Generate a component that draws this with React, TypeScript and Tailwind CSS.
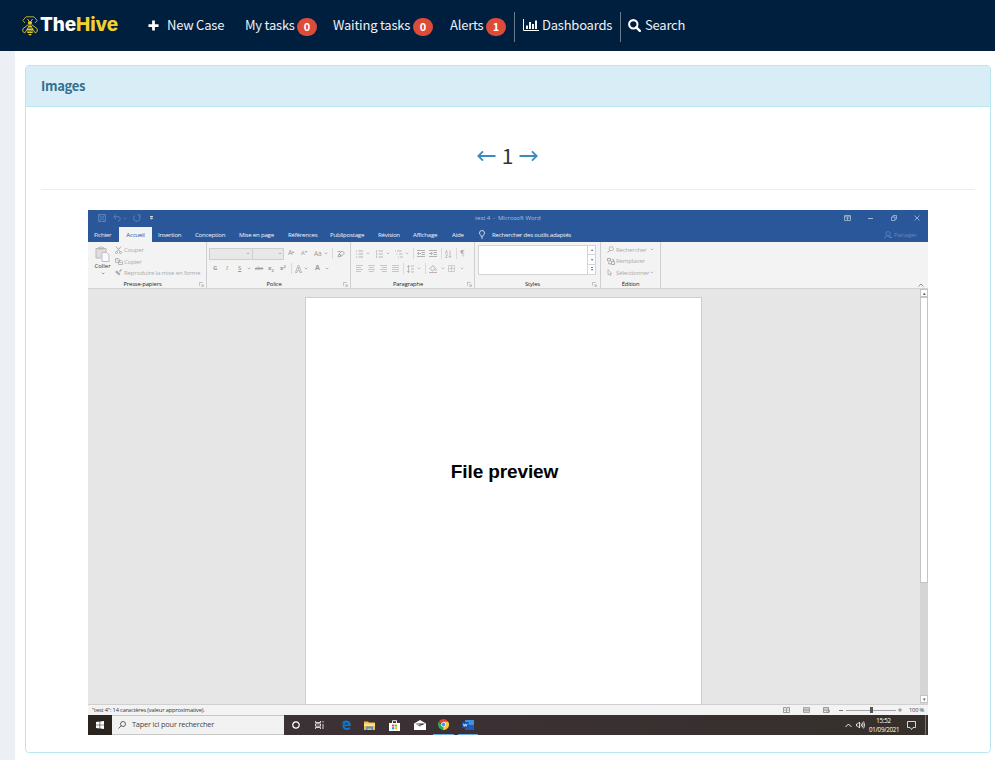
import type { ReactNode } from "react";

type BoxProps = { c: string; children?: ReactNode };

const Box = ({ c, children }: BoxProps) => (
  <div className={`flex shrink-0 items-center whitespace-nowrap ${c}`}>{children}</div>
);

type GlyphProps = { c: string; box: string; children: ReactNode };

const Glyph = ({ c, box, children }: GlyphProps) => (
  <svg className={`block shrink-0 ${c}`} viewBox={box} fill="none" stroke="currentColor">
    {children}
  </svg>
);

const BeeLogo = () => (
  <Glyph c="h-5 w-4 text-[#e5c932]" box="0 0 16 20">
    <path d="M3 7 .8 4.500 4 .8h8l3.200 3.700L13 7" strokeWidth=".8" />
    <path d="M5.500 3 7 5.200M10.500 3 9 5.200" strokeWidth=".9" />
    <path d="M6 5.800 8 5l2 .8v1.700L8 9 6 7.500z" fill="currentColor" stroke="none" />
    <path d="M6.500 8.500.8 12.800v2.700l2 1.500 3.400-5.500M9.500 8.500l5.700 4.300v2.700l-2 1.500-3.400-5.500" strokeWidth=".9" />
    <path d="M6.500 9.500h3l.8 2H5.700zM5.200 12.500h5.600l.3 2H4.900zM4.900 15.500h6.200l-.6 1.500h-5zM6 18h4l-2 1.800z" fill="currentColor" stroke="none" />
  </Glyph>
);

const Badge = ({ children }: { children: ReactNode }) => (
  <span className="mt-[3px] flex h-[18px] w-[20px] items-center justify-center rounded-full bg-[#dd4b39] pb-[2px] font-['Noto_Sans_CJK_SC',sans-serif] text-[11px] leading-[16px] font-bold text-white">
    {children}
  </span>
);

const TopBar = () => (
  <header className="flex h-[51px] items-center bg-[#001f3f] pl-[22px] font-['Noto_Sans_CJK_SC',sans-serif] text-[13px] leading-[20px] tracking-[-0.22px] text-[#eef1f4]">
    <Box c="w-[18px]"><BeeLogo /></Box>
    <Box c="w-[108px] pb-[2px] font-['Inter',sans-serif] text-[19px] font-extrabold tracking-[-0.1px] text-white">
      The<span className="text-[#f3d02f]">Hive</span>
    </Box>
    <Box c="w-[19px]">
      <Glyph c="mb-px h-[11px] w-[11px] text-white" box="0 0 12 12"><path d="M6 .5v11M.5 6h11" strokeWidth="3" /></Glyph>
    </Box>
    <Box c="w-[78px] pb-[2px]">New Case</Box>
    <Box c="w-[52px] pb-[2px]">My tasks</Box>
    <Box c="w-[36px]"><Badge>0</Badge></Box>
    <Box c="w-[80px] pb-[2px]">Waiting tasks</Box>
    <Box c="w-[37px]"><Badge>0</Badge></Box>
    <Box c="w-[36px] pb-[2px]">Alerts</Box>
    <Box c="w-[28px]"><Badge>1</Badge></Box>
    <Box c="mt-[3px] h-[30px] w-[9px] border-l border-[#6b7b8c]" />
    <Box c="w-[19px]">
      <Glyph c="mb-[2px] h-3 w-4 text-white" box="0 0 16 12">
        <path d="M.5 0v11.500H16" />
        <path d="M4 10V6.500M7 10V3M10 10V5M13 10V1.500" strokeWidth="1.900" />
      </Glyph>
    </Box>
    <Box c="w-[78px] pb-[2px]">Dashboards</Box>
    <Box c="mt-[3px] h-[30px] w-[8px] border-l border-[#6b7b8c]" />
    <Box c="w-[17px]">
      <Glyph c="mb-px h-[13px] w-[13px] text-white" box="0 0 14 14">
        <circle cx="5.700" cy="5.700" r="4.500" strokeWidth="2.200" />
        <path d="m9 9 3.700 3.700" strokeWidth="2.600" strokeLinecap="round" />
      </Glyph>
    </Box>
    <Box c="pb-[2px]">Search</Box>
  </header>
);

const Caret = ({ c }: { c: string }) => (
  <Box c={c}>
    <Glyph c="h-[3px] w-[4px]" box="0 0 4 3"><path d="m.7.7 1.300 1.300L3.300.7" strokeWidth=".7" /></Glyph>
  </Box>
);

const Launcher = () => (
  <Glyph c="ml-[2px] h-[5px] w-[5px] text-[#999]" box="0 0 6 6">
    <path d="M.5 4.500v-4h4M2.500 2.500l2.500 2.500M5.200 2.800v2.400H2.800" strokeWidth=".7" />
  </Glyph>
);

const TitleBar = () => (
  <div className="flex h-[17px] items-center pb-px text-[#a9bedd]">
    <Box c="w-[25px] pl-[10px] text-[#6387bb]">
      <Glyph c="h-2 w-2" box="0 0 8 8"><path d="M.5.5h7v7h-7zM2 .5v2.500h4V.5M2 7.500V5h4v2.500" strokeWidth=".8" /></Glyph>
    </Box>
    <Box c="w-[10px] text-[#6387bb]">
      <Glyph c="h-2 w-2" box="0 0 8 8"><path d="M3 .5.800 2.700 3 5M1 2.700h4c3 0 3 4 0 4.500" strokeWidth=".9" /></Glyph>
    </Box>
    <Caret c="w-[10px] text-[#6387bb]" />
    <Box c="w-[17px] text-[#6387bb]">
      <Glyph c="h-2 w-2" box="0 0 8 8"><path d="M2 1.500A3.200 3.200 0 1 0 6.500 2.500M4.500.8H7v2.500" strokeWidth=".9" /></Glyph>
    </Box>
    <Box c="w-[325px] text-white">
      <Glyph c="h-[4px] w-[3px]" box="0 0 3 4"><path d="M0 .5h3M.5 2h2L1.500 3.200z" strokeWidth=".8" /></Glyph>
    </Box>
    <Box c="w-[369px] text-[6.100px] tracking-[-0.1px]">test 4&nbsp; -&nbsp; Microsoft Word</Box>
    <Box c="w-[24px]">
      <Glyph c="h-[6px] w-[7px]" box="0 0 7 6"><path d="M.5.5h6v5h-6zM.5 1.800h6M3.500 5V2.700M2.300 3.700l1.200-1.200 1.200 1.200" strokeWidth=".8" /></Glyph>
    </Box>
    <Box c="w-[23px]"><Glyph c="h-[5px] w-[5px]" box="0 0 5 5"><path d="M0 2.500h5" strokeWidth=".9" /></Glyph></Box>
    <Box c="w-[23px]"><Glyph c="h-[6px] w-[6px]" box="0 0 6 6"><path d="M.5 2h3.500v3.500H.5zM2 2V.5h3.500V4H4" strokeWidth=".8" /></Glyph></Box>
    <Glyph c="h-[6px] w-[6px]" box="0 0 6 6"><path d="m.5.5 5 5M5.500.5l-5 5" strokeWidth=".8" /></Glyph>
  </div>
);

const tabs = [
  { label: "Insertion", c: "w-[37px]" },
  { label: "Conception", c: "w-[44px]" },
  { label: "Mise en page", c: "w-[49px]" },
  { label: "Références", c: "w-[42px]" },
  { label: "Publipostage", c: "w-[48px]" },
  { label: "Révision", c: "w-[35px]" },
  { label: "Affichage", c: "w-[39px]" },
  { label: "Aide", c: "w-[27px]" },
];

const TabBar = () => (
  <div className="flex h-[15px] text-[6.100px] font-medium tracking-[-0.22px] text-[#f0f4fa]">
    <Box c="w-[31px] pl-[6px]">Fichier</Box>
    <Box c="mr-[6px] w-[33px] justify-center bg-[#f3f3f3] text-[#2a579a]">Accueil</Box>
    {tabs.map((t) => <Box key={t.label} c={t.c}>{t.label}</Box>)}
    <Box c="w-[13px]">
      <Glyph c="h-[9px] w-[6px]" box="0 0 6 9"><path d="M2 6.300C2 5 .5 4.500.5 3a2.500 2.500 0 0 1 5 0C5.500 4.500 4 5 4 6.300zM2 8h2" strokeWidth=".8" /></Glyph>
    </Box>
    <Box c="w-[392px]">Rechercher des outils adaptés</Box>
    <Box c="w-[10px] text-[#6387bb]">
      <Glyph c="h-2 w-2" box="0 0 8 8"><circle cx="4" cy="2.800" r="2.200" strokeWidth=".8" /><path d="M.6 7.500C.6 4 7 4 7 7M5 6.500h3" strokeWidth=".8" /></Glyph>
    </Box>
    <Box c="font-normal text-[#6387bb]">Partager</Box>
  </div>
);

const GroupLabel = ({ children, c }: { children: ReactNode; c: string }) => (
  <div className="flex h-[8px] items-center text-[5.800px] leading-[8px] tracking-[-0.12px] text-[#222]">
    <Box c={`justify-center ${c}`}>{children}</Box>
    <Launcher />
  </div>
);

const lineSets = {
  left: "M0 .5h7M0 2.500h5M0 4.500h7M0 6.500h5",
  center: "M0 .5h7M1 2.500h5M0 4.500h7M1 6.500h5",
  right: "M0 .5h7M2 2.500h5M0 4.500h7M2 6.500h5",
  full: "M0 .5h7M0 2.500h7M0 4.500h7M0 6.500h7",
};

const Lines = ({ kind, c }: { kind: keyof typeof lineSets; c: string }) => (
  <Box c={c}><Glyph c="h-[7px] w-[7px]" box="0 0 7 7"><path d={lineSets[kind]} strokeWidth=".6" /></Glyph></Box>
);

const Clipboard = () => (
  <div className="w-[119px] border-r border-[#cfcfcf]">
    <div className="flex h-[38px]">
      <div className="flex w-[27px] flex-col items-center pt-[4px] pl-[2px]">
        <Glyph c="h-[16px] w-[15px] text-[#b8b8b8]" box="0 0 15 16">
          <path d="M6 12H1V2.500h10V6M3.500 3V1.500h1.500L6 .5l1 1h1.500V3z" fill="#dedede" />
          <path d="M7 6.500h4.500L14 9v6.500H7z" fill="#fafafa" stroke="#c5b9c5" />
        </Glyph>
        <span className="text-[6px] leading-[8px] text-[#333]">Coller</span>
        <Caret c="mt-[2px] text-[#777]" />
      </div>
      <div className="flex flex-col pt-[2px] text-[6.100px] leading-[11px] tracking-[-0.18px] text-[#ababab]">
        <Box c="h-[11px] w-[90px]">
          <Box c="w-[9px]"><Glyph c="h-2 w-[7px]" box="0 0 7 8"><path d="m1 .5 4 5M6 .5l-4 5" /><circle cx="1.500" cy="6.500" r="1" /><circle cx="5.500" cy="6.500" r="1" /></Glyph></Box>
          Couper
        </Box>
        <Box c="h-[12px]">
          <Box c="w-[9px]"><Glyph c="h-[7px] w-[8px]" box="0 0 8 7"><path d="M.5.5h3l1 1v3h-4zM3.500 2.500h3l1 1v3h-4zM1.500 2h1.500M4.500 4.500h2" strokeWidth=".8" /></Glyph></Box>
          Copier
        </Box>
        <Box c="h-[11px]">
          <Box c="w-[9px]"><Glyph c="h-[7px] w-[7px]" box="0 0 7 7"><path d="m6.500.5-2 2" strokeWidth="1.500" /><path d="M2 1.500 5.500 5 4 6.500 0 3z" fill="currentColor" stroke="none" /></Glyph></Box>
          Reproduire la mise en forme
        </Box>
      </div>
    </div>
    <GroupLabel c="w-[109px]">Presse-papiers</GroupLabel>
  </div>
);

const FontGroup = () => (
  <div className="w-[144px] border-r border-[#cfcfcf] text-[#999]">
    <div className="flex h-[19px] items-center pt-[4px] pl-[2px] text-[7px]">
      <Box c="h-[12px] w-[44px] justify-end border border-[#cfcfcf] bg-[#e8e8e8] pr-[2px]"><Caret c="" /></Box>
      <Box c="mr-[4px] h-[12px] w-[31px] justify-end border border-l-0 border-[#cfcfcf] bg-[#e8e8e8] pr-[1px]"><Caret c="" /></Box>
      <Box c="w-[13px]">A<span className="mb-1 text-[4px]">▴</span></Box>
      <Box c="w-[13px] text-[6px]">A<span className="mb-1 text-[4px]">▾</span></Box>
      <Box c="w-[10px] text-[6.500px]">Aa</Box>
      <Caret c="w-[8px]" />
      <Box c="h-[11px] w-[5px] border-l border-[#dadada]" />
      <Glyph c="h-2 w-2" box="0 0 8 8"><path d="m2 4 3-3 2.500 2-3 3zM1 7l1-3 2.500 2zM.5 1.500h3" strokeWidth=".8" /></Glyph>
    </div>
    <div className="flex h-[15px] items-center pl-[6px] text-[6px]">
      <Box c="w-[13px] font-bold">G</Box>
      <Box c="w-[12px] font-serif italic">I</Box>
      <Box c="w-[9px] font-semibold underline">S</Box>
      <Caret c="w-[8px]" />
      <Box c="w-[13px] text-[5px] line-through">abc</Box>
      <Box c="w-[12px] font-bold">x<span className="mt-1 text-[4px]">2</span></Box>
      <Box c="w-[11px] font-bold">x<span className="mb-1 text-[4px]">2</span></Box>
      <Box c="h-[11px] w-[4px] border-l border-[#dadada]" />
      <Box c="w-[9px]">
        <Glyph c="h-2 w-[7px]" box="0 0 7 8"><path d="M.5 7.500 3 .5h1l2.500 7H5l-.6-2H2.600L2 7.500zM3 4h1l-.5-1.500z" strokeWidth=".6" /></Glyph>
      </Box>
      <Caret c="w-[11px]" />
      <Box c="w-[10px] text-[7px] font-bold">A</Box>
      <Caret c="" />
    </div>
    <div className="h-[4px]" />
    <GroupLabel c="w-[134px]">Police</GroupLabel>
  </div>
);

const listIcon = "M0 1h1M2.500 1H7M0 4h1M2.500 4H7M0 7h1M2.500 7H7";

const ParagraphGroup = () => (
  <div className="w-[124px] border-r border-[#cfcfcf] text-[#aaa]">
    <div className="flex h-[19px] items-center pt-[4px] pl-[5px] text-[7px]">
      <Box c="w-[10px]"><Glyph c="h-2 w-[7px]" box="0 0 7 8"><path d={listIcon} strokeWidth=".9" /></Glyph></Box>
      <Caret c="w-[10px]" />
      <Box c="w-[10px]"><Glyph c="h-2 w-[7px]" box="0 0 7 8"><path d={listIcon} strokeWidth=".8" /><path d="M.5 0v8" strokeWidth=".4" /></Glyph></Box>
      <Caret c="w-[9px]" />
      <Box c="w-[10px]"><Glyph c="h-2 w-[8px]" box="0 0 8 8"><path d="M0 1h1M2 1h5M1.500 4h1M4 4h3.500M3 7h1M5 7h3" strokeWidth=".8" /></Glyph></Box>
      <Caret c="w-[8px]" />
      <Box c="h-[11px] w-[4px] border-l border-[#dadada]" />
      <Box c="w-[12px]"><Glyph c="h-[7px] w-[8px]" box="0 0 8 7"><path d="M0 .5h8M4.500 2.500H8M4.500 4.500H8M0 6.500h8M4 3.500H.5M2 2 .5 3.500 2 5" strokeWidth=".9" /></Glyph></Box>
      <Box c="w-[12px]"><Glyph c="h-[7px] w-[8px]" box="0 0 8 7"><path d="M0 .5h8M4.500 2.500H8M4.500 4.500H8M0 6.500h8M0 3.500h3.500M2 2l1.500 1.500L2 5" strokeWidth=".9" /></Glyph></Box>
      <Box c="h-[11px] w-[4px] border-l border-[#dadada]" />
      <Box c="w-[8px]">
        <Glyph c="h-[8px] w-[7px]" box="0 0 7 8"><path d="M.5 3.500 1.500.5l1 3M.5 4.800h2l-2 2.700h2M5 .5v7M3.800 6 5 7.500 6.200 6" strokeWidth=".7" /></Glyph>
      </Box>
      <Box c="ml-[3px] h-[11px] w-[4px] border-l border-[#dadada]" />
      <Box c="">¶</Box>
    </div>
    <div className="flex h-[15px] items-center pl-[5px]">
      <Lines kind="left" c="w-[12px]" />
      <Lines kind="center" c="w-[12px]" />
      <Lines kind="right" c="w-[12px]" />
      <Lines kind="full" c="w-[11px]" />
      <Box c="h-[11px] w-[4px] border-l border-[#dadada]" />
      <Box c="w-[10px]"><Glyph c="h-2 w-[7px]" box="0 0 7 8"><path d="M1.500.5v7M.2 2 1.500.5 2.800 2M.2 6l1.300 1.500L2.800 6M4 1h3M4 4h3M4 7h3" strokeWidth=".8" /></Glyph></Box>
      <Caret c="w-[8px]" />
      <Box c="h-[11px] w-[4px] border-l border-[#dadada]" />
      <Box c="w-[12px]"><Glyph c="h-2 w-2" box="0 0 8 8"><path d="m1 3.500 3-3 2.500 3-3 2.500zM7 4v2" strokeWidth=".9" /><path d="M0 7.500h8" stroke="#c5aebb" /></Glyph></Box>
      <Caret c="w-[7px]" />
      <Box c="w-[12px]"><Glyph c="h-[7px] w-[7px]" box="0 0 7 7"><path d="M.5.500h6v6h-6zM3.500.5v6M.5 3.500h6" strokeWidth=".5" /></Glyph></Box>
      <Caret c="" />
    </div>
    <div className="h-[4px]" />
    <GroupLabel c="w-[114px]">Paragraphe</GroupLabel>
  </div>
);

const StylesGroup = () => (
  <div className="w-[126px] border-r border-[#cfcfcf]">
    <div className="flex h-[38px] pt-[3px] pl-[3px]">
      <div className="h-[30px] w-[110px] border border-[#d4d4d4] bg-white" />
      <div className="flex h-[30px] w-[8px] flex-col border border-l-0 border-[#d4d4d4] bg-white text-[4px] leading-none text-[#666]">
        <Box c="h-[9px] justify-center border-b border-[#d4d4d4]">▴</Box>
        <Box c="h-[10px] justify-center border-b border-[#d4d4d4]">▾</Box>
        <Box c="h-[9px] justify-center"><span className="border-t border-[#777]">▾</span></Box>
      </div>
    </div>
    <GroupLabel c="w-[115px]">Styles</GroupLabel>
  </div>
);

const EditGroup = () => (
  <div className="w-[60px] border-r border-[#cfcfcf] text-[6.100px] tracking-[-0.18px] text-[#ababab]">
    <div className="h-[38px] pt-[2px] pl-[6px]">
      <Box c="h-[11px]">
        <Box c="w-[9px]"><Glyph c="h-[7px] w-[7px]" box="0 0 7 7"><circle cx="4.300" cy="2.700" r="2.100" strokeWidth=".8" /><path d="M2.700 4.300.5 6.500" /></Glyph></Box>
        <Box c="w-[34px]">Rechercher</Box>
        <Caret c="" />
      </Box>
      <Box c="h-[12px]">
        <Box c="w-[9px]"><Glyph c="h-[7px] w-[8px]" box="0 0 8 7"><path d="M.5.5h3V3h-3zM4.500 3.500h3v3h-3zM5 1.500h1.500V3M1.500 4.500v1.300H4" strokeWidth="1" /></Glyph></Box>
        Remplacer
      </Box>
      <Box c="h-[11px]">
        <Box c="w-[9px]"><Glyph c="h-[7px] w-[6px]" box="0 0 6 7"><path d="M1 .5v5.300l1.300-1 .9 1.800.8-.4-.8-1.700h1.600z" strokeWidth=".7" /></Glyph></Box>
        <Box c="w-[34px]">Sélectionner</Box>
        <Caret c="" />
      </Box>
    </div>
    <div className="flex h-[8px] items-center justify-center text-[5.800px] leading-[8px] text-[#222]">Édition</div>
  </div>
);

const StatusBar = () => (
  <div className="flex h-[11px] items-center border-t border-[#d0d0d0] bg-[#f3f3f3] pl-[4px] text-[5.700px] tracking-[-0.16px] text-[#333]">
    <Box c="w-[691px]">"test 4": 14 caractères (valeur approximative).</Box>
    <Box c="w-[20px] text-[#888]"><Glyph c="h-[6px] w-[7px]" box="0 0 7 6"><path d="M.5.500h2.500l.5.500.5-.5h2.500v5H.5zM3.500 1v4.500M1.500 2h1M1.500 3.500h1M4.500 2h1M4.500 3.500h1" strokeWidth=".8" /></Glyph></Box>
    <Box c="w-[20px] text-[#888]"><Glyph c="h-[6px] w-[7px]" box="0 0 7 6"><path d="M.5.500h6v5h-6zM.5 2h6M.5 3h6M.5 4h6" strokeWidth=".7" /></Glyph></Box>
    <Box c="w-[16px] text-[#888]"><Glyph c="h-[6px] w-[7px]" box="0 0 7 6"><path d="M.5.500h5v5h-5zM.5 2h5M.5 3.500h3" strokeWidth=".8" /><circle cx="5.200" cy="4.200" r="1.400" strokeWidth=".8" /></Glyph></Box>
    <Box c="w-[7px]"><div className="h-px w-[4px] bg-[#777]" /></Box>
    <div className="flex w-[50px] items-center">
      <div className="h-px w-[24px] bg-[#a5a5a5]" />
      <div className="h-[6px] w-[3px] bg-[#555]" />
      <div className="h-px w-[23px] bg-[#a5a5a5]" />
    </div>
    <Box c="w-[13px] pl-[2px]"><Glyph c="h-[4px] w-[4px] text-[#777]" box="0 0 4 4"><path d="M2 0v4M0 2h4" strokeWidth=".8" /></Glyph></Box>
    <Box c="">100 %</Box>
  </div>
);

const TaskBar = () => (
  <div className="flex h-[20px] bg-linear-to-r from-[#3c3437] via-[#3b3033] to-[#35302c] text-white">
    <Box c="w-[24px] justify-center bg-[#2b231e]">
      <Glyph c="h-[8px] w-[8px]" box="0 0 8 8"><path d="M0 1.100 3.600.600v3.100H0zM4.200.500 8 0v3.700H4.200zM0 4.300h3.600v3.100L0 6.900zM4.200 4.300H8V8l-3.800-.5z" fill="currentColor" stroke="none" /></Glyph>
    </Box>
    <Box c="mr-[8px] w-[172px] border-y border-[#c8c8c8] bg-[#f2f2f2] pl-[6px] text-[7.400px] tracking-[-0.2px] text-[#444]">
      <Box c="w-[14px]"><Glyph c="h-2 w-2" box="0 0 8 8"><circle cx="5" cy="3" r="2.500" strokeWidth=".8" /><path d="M3.200 4.800.5 7.500" strokeWidth=".8" /></Glyph></Box>
      Taper ici pour rechercher
    </Box>
    <Box c="w-[23px]"><Glyph c="h-2 w-2" box="0 0 8 8"><circle cx="4" cy="4" r="3.200" strokeWidth="1.200" /></Glyph></Box>
    <Box c="w-[26px]"><Glyph c="h-2 w-[9px]" box="0 0 9 8"><path d="M.5 0v1.500h5V0M.5 8V6.500h5V8M.5 2.800h5v2.400h-5zM8 0v1.500M8 3v5" strokeWidth=".8" /></Glyph></Box>
    <Box c="w-[23px]">
      <Glyph c="h-[10px] w-[10px]" box="0 0 10 10"><path d="M.3 4.800C1-.8 9.800-1.300 9.800 5v1H3.500c.2 2.300 3.500 2.400 5.500 1.200v2C6 10.800 1.500 10 1.500 6c0-1.500 1-2.600 2.200-3C2 3.100.9 3.800.3 4.800zM3.600 4.400h3.600c0-2.200-3.200-2.200-3.600 0z" fill="#0a78d4" fillRule="evenodd" stroke="none" /></Glyph>
    </Box>
    <Box c="w-[25px]">
      <Glyph c="h-[9px] w-[11px]" box="0 0 11 9"><path d="M0 .5h4l1 1h6V9H0z" fill="#f1bd43" stroke="none" /><path d="M0 2.500h11V5H0z" fill="#ffe08a" stroke="none" /><path d="M2 9V5.500h7V9H7.500V7.500h-4V9z" fill="#4596d5" stroke="none" /></Glyph>
    </Box>
    <Box c="w-[25px]">
      <Glyph c="h-[11px] w-[11px]" box="0 0 11 11"><path d="M0 3h11v8H0z" fill="#fff" stroke="none" /><path d="M3.500 3V.7h4V3" stroke="#fff" strokeWidth=".9" /><path d="M3 4.500h2.200v2H3z" fill="#f25022" stroke="none" /><path d="M5.800 4.500H8v2H5.800z" fill="#7fba00" stroke="none" /><path d="M3 7.200h2.200v2H3z" fill="#00a4ef" stroke="none" /><path d="M5.800 7.200H8v2H5.800z" fill="#ffb900" stroke="none" /></Glyph>
    </Box>
    <Box c="w-[19px]">
      <Glyph c="h-[10px] w-[12px]" box="0 0 12 10"><path d="M0 3.500 6 0l6 3.500V10H0z" fill="#fff" stroke="none" /><path d="M1 3.500h10L6 6.500z" fill="#3b3033" stroke="none" /><path d="m1 3.500 5 1.500 2 1" stroke="#fff" strokeWidth=".7" /></Glyph>
    </Box>
    <Box c="mr-[4px] w-[21px] justify-center border-b border-[#6ea9df]">
      <Glyph c="h-[11px] w-[11px]" box="0 0 12 12">
        <path d="M6 6 .8 3a6 6 0 0 1 10.400 0z" fill="#e34133" stroke="none" />
        <path d="M6 6h-2L.8 3A6 6 0 0 0 5.500 12z" fill="#2da94f" stroke="none" />
        <path d="M6 6 5.500 12A6 6 0 0 0 11.200 3H6z" fill="#fcc934" stroke="none" />
        <circle cx="6" cy="6" r="2.400" fill="#4a8cf5" stroke="#fff" strokeWidth=".8" />
      </Glyph>
    </Box>
    <Box c="w-[20px] justify-center border-b border-[#6ea9df]">
      <Glyph c="h-[10px] w-[12px]" box="0 0 12 10"><path d="M3 0h9v5H3z" fill="#3e91de" stroke="none" /><path d="M3 5h9v5H3z" fill="#1b5dbd" stroke="none" /><path d="M0 2h6.500v6H0z" fill="#174ea6" stroke="none" /><path d="m1.300 3.700.9 2.700 1-2.500 1 2.500.9-2.700" stroke="#fff" strokeWidth=".7" /></Glyph>
    </Box>
    <Box c="ml-[367px] w-[11px]"><Glyph c="h-[5px] w-[7px]" box="0 0 7 5"><path d="m.5 4 3-3 3 3" strokeWidth=".9" /></Glyph></Box>
    <Box c="w-[13px]"><Glyph c="h-2 w-[9px]" box="0 0 9 8"><path d="M.5 3h1L3.500 1v6l-2-2h-1zM5 2.500q1 1.500 0 3M6.300 1.500q1.500 2.500 0 5M7.600.500q2 3.500 0 7" strokeWidth=".8" /></Glyph></Box>
    <div className="flex w-[38px] flex-col justify-center text-center text-[6.200px] leading-[9px] tracking-[-0.25px] whitespace-nowrap">
      <span className="w-[29px]">15:52</span>
      <span className="w-[29px]">01/09/2021</span>
    </div>
    <Box c="w-[18px]"><Glyph c="h-[9px] w-[9px]" box="0 0 9 9"><path d="M.5.500h8v6H6l-1.500 2-1.500-2H.5z" strokeWidth=".8" /></Glyph></Box>
    <div className="w-px bg-[#777]" />
  </div>
);

const ScrollButton = ({ children }: { children: ReactNode }) => (
  <div className="flex h-[8px] w-[8px] items-center justify-center border border-[#c4c4c4] bg-white text-[5px] leading-none text-[#555]">{children}</div>
);

const WordPreview = () => (
  <div className="ml-[47px] h-[525px] w-[840px] overflow-hidden font-['Open_Sans','Noto_Sans',sans-serif]">
    <div className="h-[32px] bg-[#2a579a]">
      <TitleBar />
      <TabBar />
    </div>
    <div className="flex h-[47px] border-b border-[#d2d2d2] bg-[#f3f3f3]">
      <Clipboard />
      <FontGroup />
      <ParagraphGroup />
      <StylesGroup />
      <EditGroup />
      <div className="flex flex-1 items-end justify-end pr-[4px] pb-[1px] text-[#777]">
        <Glyph c="h-[4px] w-[6px]" box="0 0 6 4"><path d="m.5 3.500 2.500-2.500 2.500 2.500" strokeWidth=".8" /></Glyph>
      </div>
    </div>
    <div className="flex h-[415px] bg-[#e6e6e6]">
      <div className="mt-[8px] ml-[217px] flex w-[397px] justify-center border border-b-0 border-[#cecece] bg-white pt-[160px] pl-[2px] font-['Liberation_Sans',Arial,sans-serif] text-[19px] leading-[28px] font-bold tracking-[-0.12px] text-black">
        File preview
      </div>
      <div className="ml-auto flex w-[8px] flex-col bg-[#d5d5d5]">
        <ScrollButton>▴</ScrollButton>
        <div className="h-[286px] border border-[#c4c4c4] bg-white" />
        <div className="mt-auto mb-px"><ScrollButton>▾</ScrollButton></div>
      </div>
    </div>
    <StatusBar />
    <TaskBar />
  </div>
);

export default function App() {
  return (
    <div className="flex h-[760px] w-[995px] flex-col overflow-hidden bg-white font-['Noto_Sans_CJK_SC',sans-serif]">
      <TopBar />
      <div className="flex flex-1">
        <div className="w-[15px] bg-[#ecf0f5]" />
        <main className="flex-1 pt-[14px] pr-[4px] pl-[10px]">
          <section className="h-[688px] rounded-[4px] border border-[#b9e7ef]">
            <h3 className="flex h-[41px] items-center rounded-t-[3px] border-b border-[#b9e7ef] bg-[#d9edf7] pl-[15px] text-[13px] font-bold tracking-[-0.3px] text-[#31708f]">
              Images
            </h3>
            <div className="px-[15px]">
              <div className="mb-[20px] flex h-[83px] items-center justify-center border-b border-[#eee] pt-[16px] pr-px text-[21px] leading-[30px] text-[#333]">
                <Glyph c="h-[12px] w-[19px] text-[#3c8dbc]" box="0 0 19 12"><path d="M18.500 6H1.500M6 1.300 1.300 6 6 10.700" strokeWidth="1.900" /></Glyph>
                <span className="w-[23px] pb-[2px] text-center">1</span>
                <Glyph c="h-[12px] w-[19px] text-[#3c8dbc]" box="0 0 19 12"><path d="M.5 6h17M13 1.300 17.700 6 13 10.700" strokeWidth="1.900" /></Glyph>
              </div>
              <WordPreview />
            </div>
          </section>
        </main>
      </div>
    </div>
  );
}
